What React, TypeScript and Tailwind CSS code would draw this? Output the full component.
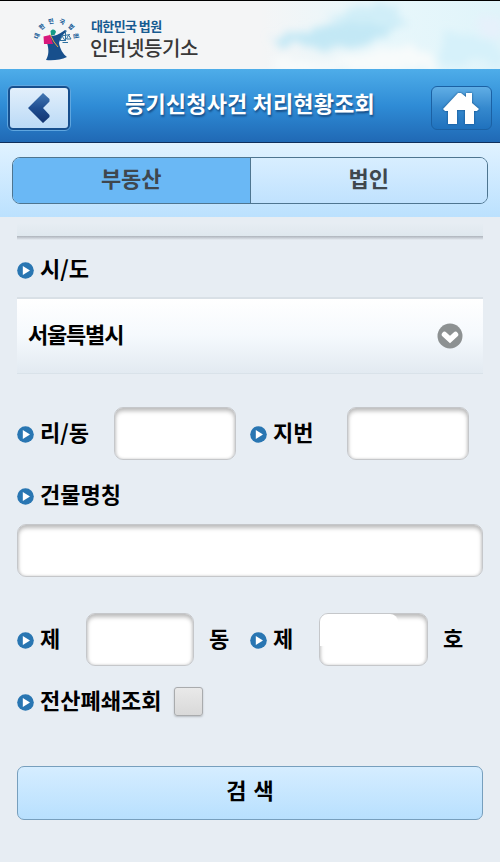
import { useState } from "react";

const sealLetters = [
  { char: "대", x: 37, y: 36, rotate: -70 },
  { char: "한", x: 42, y: 27, rotate: -42 },
  { char: "민", x: 51, y: 21.5, rotate: -12 },
  { char: "국", x: 62, y: 22, rotate: 22 },
  { char: "법", x: 71, y: 27, rotate: 48 },
  { char: "원", x: 76, y: 36, rotate: 80 },
];

const Seal = () => {
  return (
    <svg width="56" height="56" viewBox="28 12 56 56" className="shrink-0">
      {sealLetters.map(({ char, x, y, rotate }) => (
        <text
          key={char}
          x="0"
          y="2"
          fontSize="6"
          fontWeight="900"
          textAnchor="middle"
          fill="#1f639b"
          transform={`translate(${x} ${y}) rotate(${rotate})`}
        >
          {char}
        </text>
      ))}
      <path
        d="M50 35 C55 37 59 34 65 30 L67 31 C62 35 60 39 59 43 C60 49 63 54 67 57 Q58 61 46 60 C49 55 49 49 47 43 Z"
        fill="#174f8c"
      />
      <path d="M43.500 36.500 L50 35 L53 44 L44 44 Z" fill="#d8187c" />
      <path d="M50 34.500 L54 42 L58 47" fill="none" stroke="#e9a13b" strokeWidth="1" />
      <path d="M50.500 31 C52 28.500 55.500 29 56 32 L54.500 35 L51 35 Z" fill="#159b85" />
      <path
        d="M65.500 31 V41 M61 36 L70 34.500 M62 36 L60 40.500 H65 L62 36 M68.500 35 L66.500 39 H71 Z M62.500 42.500 H68"
        fill="none"
        stroke="#2f709f"
        strokeWidth="1"
      />
    </svg>
  );
};

const Sky = () => {
  return (
    <svg width="300" height="68" viewBox="0 0 300 68" className="absolute right-0 top-0">
      <defs>
        <filter id="cloud" x="-30%" y="-60%" width="160%" height="220%">
          <feTurbulence type="fractalNoise" baseFrequency="0.06" numOctaves="4" seed="9" />
          <feDisplacementMap
            in="SourceGraphic"
            scale="22"
            xChannelSelector="R"
            yChannelSelector="G"
          />
          <feGaussianBlur stdDeviation="4.500" />
        </filter>
        <linearGradient id="sky" x1="0" x2="1">
          <stop offset="0.200" stopColor="#e8f7fb" stopOpacity="0" />
          <stop offset="0.600" stopColor="#e8f7fb" />
          <stop offset="1" stopColor="#e0f4fa" />
        </linearGradient>
      </defs>
      <rect width="300" height="68" fill="url(#sky)" />
      <g filter="url(#cloud)">
        <path d="M70 37 L116 28 L165 20 L208 22 L186 34 L144 48 L86 45 Z" fill="#c3e8f5" />
        <path d="M125 15 L165 2 L200 5 L200 27 L155 26 Z" fill="#d0eef8" />
        <path d="M240 25 L300 45 L300 64 L245 64 Z" fill="#d6f1fa" />
        <path d="M70 62 L140 58 L190 46 L225 50 L240 68 L70 70 Z" fill="#f8fbfb" />
        <path d="M275 14 L300 16 L300 42 L280 35 Z" fill="#e6f1fb" />
      </g>
    </svg>
  );
};

const Marker = () => {
  return (
    <svg width="17" height="17" viewBox="0 0 17 17" className="mt-px shrink-0">
      <circle cx="8.500" cy="8.500" r="8.300" fill="#2976b2" />
      <path d="M5.800 4 L13 8.500 L5.800 13 Z" fill="#fff" />
    </svg>
  );
};

const Label = ({ text, className = "" }: { text: string; className?: string }) => {
  return (
    <div className={`flex items-center gap-1.5 whitespace-nowrap ${className}`}>
      <Marker />
      <span className="pb-1.5">{text}</span>
    </div>
  );
};

const Field = ({
  value,
  onChange,
  label,
  className,
}: {
  value: string;
  onChange: (v: string) => void;
  label: string;
  className: string;
}) => {
  return (
    <input
      aria-label={label}
      value={value}
      onChange={(e) => onChange(e.target.value)}
      className={`h-[53px] rounded-[9px] border border-[#c5c7ca] bg-white px-3 outline-none ${className}`}
    />
  );
};

const shadow = "shadow-[inset_0_3px_4px_#bcbcbc,inset_0_0_3px_#d0d0d0]";

export default function App() {
  const [tab, setTab] = useState("부동산");

  const [form, setForm] = useState({ ri: "", lot: "", building: "", dong: "", ho: "" });

  const [closed, setClosed] = useState(false);

  const update = (key: string) => (v: string) => setForm((form) => ({ ...form, [key]: v }));

  return (
    <div className="h-[862px] w-[500px] overflow-hidden bg-[#e7edf3] font-['Noto_Sans_CJK_KR',sans-serif] text-[22px] leading-8 font-bold text-black">
      <header className="relative flex h-[69px] border-t border-black bg-[#f4f5f6] pt-[11px] pl-7">
        <Sky />
        <Seal />
        <div className="ml-1.5 flex flex-col pt-[5px]">
          <span className="pl-px text-[13px] leading-[18px] tracking-[-0.6px] text-[#175b91]">
            대한민국 법원
          </span>
          <span className="mt-0.5 text-[20px] leading-[22px] font-medium tracking-[-0.4px] text-[#383838]">
            인터넷등기소
          </span>
        </div>
      </header>

      <div className="flex h-[74px] items-center justify-between border-b border-[#102f5b] bg-linear-to-b from-[#4eade9] via-[#2f8cd6] to-[#2069b5] pr-2 pl-[7px]">
        <button
          aria-label="뒤로"
          className="mt-1 flex h-[46px] w-[64px] items-center justify-center rounded-md border border-[#5fa6df] bg-[#174f8e] p-[2px]"
        >
          <span className="flex h-full w-full items-center justify-center rounded-[3px] bg-linear-to-b from-[#e2effb] to-[#bbdaf6]">
            <svg width="24" height="32" viewBox="0 0 24 32">
              <defs>
                <linearGradient id="back" x1="0" y1="0" x2="0" y2="1">
                  <stop stopColor="#4378b4" />
                  <stop offset="0.500" stopColor="#1f4e91" />
                  <stop offset="1" stopColor="#123370" />
                </linearGradient>
              </defs>
              <path
                d="M16 1 L22.500 7 V9.500 L16 16 L22.500 23 V25 L16 31 L1 16 Z"
                fill="url(#back)"
              />
            </svg>
          </span>
        </button>
        <h1 className="mr-0.5 pb-[7px] tracking-[0.15px] text-white [text-shadow:1px_2px_2px_#174e87]">
          등기신청사건 처리현황조회
        </h1>
        <button
          aria-label="홈"
          className="mt-1 flex h-[44px] w-[61px] items-center justify-center rounded-md border border-[#1b61a4] bg-linear-to-b from-[#60aee5] via-[#3589ce] to-[#1f71bd]"
        >
          <svg width="38" height="34" viewBox="0 0 38 34" className="drop-shadow-[0_0_1px_#104b83]">
            <path
              d="M16 2 H19 L24 6 V2 H30 V12 L37 18 L35 20 H32 V33 H23 V19 H15 V33 H6 V20 H3 L1 18 Z"
              fill="#fff"
            />
          </svg>
        </button>
      </div>

      <div className="h-[74px] bg-linear-to-b from-[#e0f2ff] to-[#bbe1fe] px-3 pt-3.5">
        <div className="flex h-[47px] overflow-hidden rounded-lg border border-[#4e7590]">
          {["부동산", "법인"].map((name) => (
            <button
              key={name}
              onClick={() => setTab(name)}
              className={`flex-1 border-[#4e7590] pb-[8px] text-[#3f474e] first:border-r ${
                tab === name
                  ? "bg-[#6ab8f5]"
                  : "bg-linear-to-b from-[#d8eeff] to-[#c0e2fe]"
              }`}
            >
              {name}
            </button>
          ))}
        </div>
      </div>

      <main className="px-[17px]">
        <div className="h-[19px] bg-linear-to-b from-[#e7edf3] from-30% to-[#dfe8ee]" />
        <div className="h-1 bg-linear-to-b from-[#adb3bb] to-[#e7edf3]" />

        <Label text="시/도" className="mt-3 h-9" />

        <button className="mt-[9px] flex h-[77px] w-full items-center justify-between border-t-2 border-b border-t-[#d9e0e6] border-b-[#d9e2e9] bg-linear-to-b from-white via-[#f5f9fd] to-[#e2eaf1] pr-5 pl-[11px]">
          <span className="pb-[6px] tracking-[-1.2px]">서울특별시</span>
          <svg width="26" height="26" viewBox="0 0 26 26">
            <circle cx="13" cy="13" r="12.500" fill="#8d9192" />
            <path d="M7.500 11.500 L13 16.500 L18.500 11.500" fill="none" stroke="#fff" strokeWidth="5.500" strokeLinecap="round" />
          </svg>
        </button>

        <div className="mt-[33px] flex h-[53px] items-center">
          <Label text="리/동" className="w-[97px]" />
          <Field label="리/동" value={form.ri} onChange={update("ri")} className={`w-[122px] ${shadow}`} />
          <Label text="지번" className="ml-3.5 w-[97px]" />
          <Field label="지번" value={form.lot} onChange={update("lot")} className={`w-[122px] ${shadow}`} />
        </div>

        <Label text="건물명칭" className="mt-[18px] h-9" />
        <Field
          label="건물명칭"
          value={form.building}
          onChange={update("building")}
          className={`mt-[10px] block w-full ${shadow}`}
        />

        <div className="mt-[36px] flex h-[53px] items-center">
          <Label text="제" className="w-[69px]" />
          <Field label="동" value={form.dong} onChange={update("dong")} className={`w-[108px] ${shadow}`} />
          <span className="ml-[15px] w-[41px] pb-1.5">동</span>
          <Label text="제" className="w-[69px]" />
          <div className="relative">
            <Field label="호" value={form.ho} onChange={update("ho")} className={`block w-[109px] ${shadow}`} />
            <span className="pointer-events-none absolute top-px left-px h-8 w-[78px] rounded-tl-lg rounded-tr-lg bg-white" />
          </div>
          <span className="ml-[15px] pb-1.5">호</span>
        </div>

        <div className="mt-[18px] flex h-9 items-center gap-[13px]">
          <Label text="전산폐쇄조회" />
          <button
            role="checkbox"
            aria-label="전산폐쇄조회"
            aria-checked={closed}
            onClick={() => setClosed(!closed)}
            className="mb-0.5 flex size-[29px] items-center justify-center rounded-[3px] border border-[#a9abad] bg-linear-to-b from-[#e9e9e9] to-[#d9d9d9] shadow-[0_1px_2px_#b8bdc2]"
          >
            {closed && "✓"}
          </button>
        </div>

        <button className="mt-[46px] h-[54px] w-full rounded-[7px] border border-[#779fbd] bg-linear-to-b from-[#d5edff] to-[#b8e0fe] pb-2 [word-spacing:2px]">
          검 색
        </button>
      </main>
    </div>
  );
}
